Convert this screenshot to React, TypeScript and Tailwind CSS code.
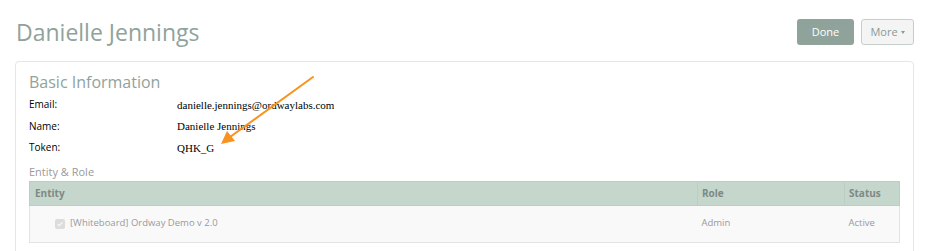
export default function App() {
  return (
    <div className="relative min-h-screen bg-white px-[15px] pt-[18px]" style={{ fontFamily: '"Open Sans", sans-serif' }}>
      <div className="flex items-center justify-between pr-0">
        <h1 className="pl-px text-[23px] leading-[28px] text-[#8fa39b]">Danielle Jennings</h1>
        <div className="flex gap-[7px]">
          <button className="h-[26px] w-[57px] rounded-[3px] bg-[#8fa39a] text-[11px] text-white">Done</button>
          <button className="flex h-[26px] w-[53px] items-center justify-center gap-[3px] rounded-[3px] border border-[#c4cfca] bg-[#f4f4f4] text-[11px] text-[#8a9a93]">
            More
            <span className="mt-px border-x-[2.5px] border-t-[3px] border-x-transparent border-t-[#8a9a93]" />
          </button>
        </div>
      </div>

      <div className="mt-[15px] rounded-[4px] border border-[#e6e6e6] px-[13px] pt-[9px] pb-[20px]">
        <h2 className="text-[16px] leading-[22px] text-[#8fa39b]">Basic Information</h2>
        <div className="mt-[3px] flex flex-col gap-[4px] text-[10px]">
          {[
            ['Email:', 'danielle.jennings@ordwaylabs.com'],
            ['Name:', 'Danielle Jennings'],
            ['Token:', 'QHK_G'],
          ].map(([k, v]) => (
            <div key={k} className="flex h-[17.5px] items-center">
              <span className="w-[148px] text-black">{k}</span>
              <span className="text-[11px] font-normal text-black" style={{ fontFamily: '"Liberation Serif", serif' }}>{v}</span>
            </div>
          ))}
        </div>
        <div className="mt-[7px] text-[11px] leading-[16px] text-[#9a9a9a]">Entity &amp; Role</div>
        <table className="mt-[1px] w-full border-collapse text-[9.5px]">
          <thead>
            <tr className="h-[24px] bg-[#c5d6cc] text-left text-[10px] text-[#7d8a84]">
              <th className="border border-[#bccdc3] px-[5px] font-bold">Entity</th>
              <th className="w-[147px] border border-[#bccdc3] px-[4px] font-bold">Role</th>
              <th className="w-[55px] border border-[#bccdc3] px-[4px] font-bold">Status</th>
            </tr>
          </thead>
          <tbody>
            <tr className="h-[37px] bg-[#f9f9f9] text-[#9a9a9a]">
              <td className="border-y border-l border-[#e3e3e3] pl-[25px]">
                <span className="flex items-center gap-[5px]">
                  <span className="flex h-[10px] w-[10px] items-center justify-center rounded-[2px] bg-[#dcdcdc]">
                    <svg width="8" height="8" viewBox="0 0 8 8"><path d="M1.5 4.2 3.2 5.8 6.5 2.2" fill="none" stroke="#f4f4f4" strokeWidth="1.3" /></svg>
                  </span>
                  [Whiteboard] Ordway Demo v 2.0
                </span>
              </td>
              <td className="border-y border-[#e3e3e3] px-[4px]">Admin</td>
              <td className="border-y border-r border-[#e3e3e3] px-[4px]">Active</td>
            </tr>
          </tbody>
        </table>
      </div>

      <svg className="pointer-events-none absolute left-0 top-0" width="929" height="251">
        <line x1="313" y1="77" x2="230" y2="137" stroke="#f7931e" strokeWidth="2" strokeLinecap="round" />
        <polygon points="221,144 227,131 235,141" fill="#f7931e" />
      </svg>
    </div>
  );
}
